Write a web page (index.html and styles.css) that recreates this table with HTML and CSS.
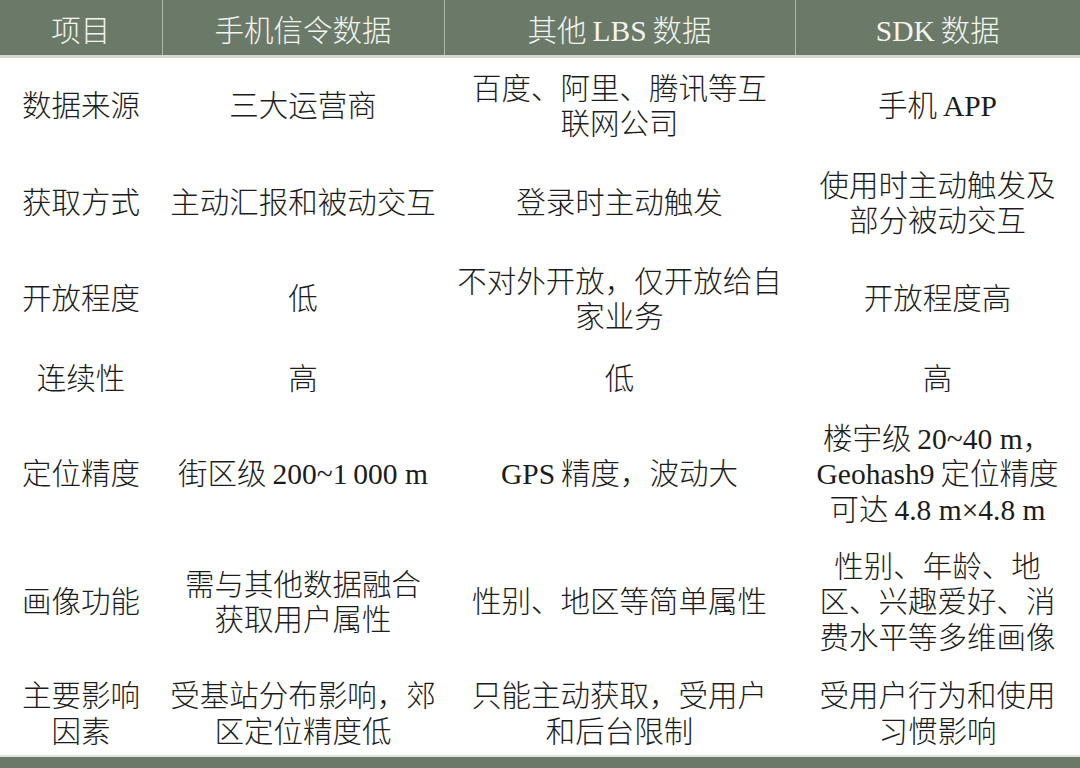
FILE: index.html
```html
<!DOCTYPE html>
<html lang="zh-CN">
<head>
<meta charset="utf-8">
<title>数据对比</title>
<link rel="stylesheet" href="styles.css">
</head>
<body>
<table class="compare">
  <colgroup>
    <col class="c1"><col class="c2"><col class="c3"><col class="c4">
  </colgroup>
  <thead>
    <tr>
      <th>项目</th>
      <th>手机信令数据</th>
      <th>其他&thinsp;LBS&thinsp;数据</th>
      <th>SDK&thinsp;数据</th>
    </tr>
  </thead>
  <tbody>
    <tr class="r-first">
      <td>数据来源</td>
      <td>三大运营商</td>
      <td>百度、阿里、腾讯等互<br>联网公司</td>
      <td>手机&thinsp;APP</td>
    </tr>
    <tr class="r-two">
      <td>获取方式</td>
      <td>主动汇报和被动交互</td>
      <td>登录时主动触发</td>
      <td>使用时主动触发及<br>部分被动交互</td>
    </tr>
    <tr class="r-two">
      <td>开放程度</td>
      <td>低</td>
      <td>不对外开放，仅开放给自<br>家业务</td>
      <td>开放程度高</td>
    </tr>
    <tr class="r-one">
      <td>连续性</td>
      <td>高</td>
      <td>低</td>
      <td>高</td>
    </tr>
    <tr class="r-three">
      <td>定位精度</td>
      <td>街区级&thinsp;200~1&thinsp;000 m</td>
      <td>GPS&thinsp;精度，波动大</td>
      <td>楼宇级&thinsp;20~40 m，<br>Geohash9&thinsp;定位精度<br>可达&thinsp;4.8 m×4.8 m</td>
    </tr>
    <tr class="r-three-b">
      <td>画像功能</td>
      <td>需与其他数据融合<br>获取用户属性</td>
      <td>性别、地区等简单属性</td>
      <td>性别、年龄、地<br>区、兴趣爱好、消<br>费水平等多维画像</td>
    </tr>
    <tr class="r-last">
      <td>主要影响<br>因素</td>
      <td>受基站分布影响，郊<br>区定位精度低</td>
      <td>只能主动获取，受用户<br>和后台限制</td>
      <td>受用户行为和使用<br>习惯影响</td>
    </tr>
  </tbody>
</table>
<div class="bottom-bar"></div>
</body>
</html>
```

FILE: styles.css
```css
html, body {
  margin: 0;
  padding: 0;
  background: #ffffff;
}

body {
  width: 1080px;
  height: 768px;
  overflow: hidden;
  font-family: "Liberation Serif", "Noto Sans CJK SC", serif;
  font-size: 29.5px;
  font-weight: 300;
  color: #1c1c1c;
}

.compare {
  width: 1080px;
  border-collapse: collapse;
  table-layout: fixed;
}

.c1 { width: 162px; }
.c2 { width: 282px; }
.c3 { width: 351px; }
.c4 { width: 285px; }

.compare th {
  height: 55px;
  padding: 0;
  background: #6b7a68;
  color: #f3f4ef;
  font-weight: 300;
  text-align: center;
  vertical-align: middle;
  border-bottom: 3px solid #d3d9d1;
  border-left: 1px solid #aeb8ab;
}

.compare th:first-child {
  border-left: none;
}

.compare td {
  padding: 0;
  text-align: center;
  vertical-align: middle;
  line-height: 35.5px;
}

.r-first td { height: 98px; }
.r-two td { height: 96px; }
.r-one td { height: 64px; }
.r-three td { height: 126px; }
.r-three-b td { height: 130px; }
.r-last td { height: 81px; padding-top: 6px; }

.bottom-bar {
  height: 11px;
  background: #6b7a68;
  border-top: 2px solid #dde2db;
}
```
